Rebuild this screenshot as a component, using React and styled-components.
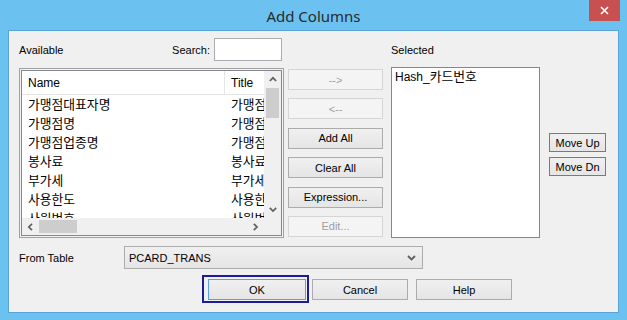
import React from 'react';
import styled, { createGlobalStyle } from 'styled-components';

const Global = createGlobalStyle`
  html, body { margin: 0; padding: 0; width: 627px; height: 320px; overflow: hidden; background: #6bc2f0; }
  #root { width: 627px; height: 320px; }
  * { box-sizing: border-box; }
`;

const Window = styled.div`
  width: 627px;
  height: 320px;
  background: #6bc2f0;
  display: flex;
  flex-direction: column;
  font-family: "Liberation Sans", "Noto Sans CJK KR", sans-serif;
  font-size: 11px;
  color: #000;
`;

const TitleBar = styled.div`
  height: 30px;
  flex: none;
  display: grid;
  grid-template-columns: 1fr auto 1fr;
  align-items: start;
`;

const Title = styled.div`
  grid-column: 2;
  font-family: "Noto Sans", "Open Sans", sans-serif;
  font-size: 15px;
  color: #2a2a2a;
  line-height: 30px;
  padding-top: 1px;
`;

const CloseBtn = styled.div`
  grid-column: 3;
  justify-self: end;
  margin-right: 7px;
  width: 31px;
  height: 21px;
  background: #c75050;
  display: flex;
  align-items: center;
  justify-content: center;
`;

const Client = styled.div`
  flex: 1;
  margin: 0 8px 7px;
  background: #f0f0f0;
  border: 1px solid #5aa3d4;
  padding: 7px 0 0 10px;
  display: flex;
  flex-direction: column;
`;

const Main = styled.div`
  display: flex;
  align-items: flex-start;
  height: 200px;
`;

const LeftCol = styled.div`
  width: 265px;
  display: flex;
  flex-direction: column;
`;

const HeaderRow = styled.div`
  height: 23px;
  display: flex;
  align-items: center;
  padding-right: 2px;
`;

const Label = styled.span`
  white-space: nowrap;
`;

const SearchGroup = styled.div`
  margin-left: auto;
  display: flex;
  align-items: center;
  gap: 4px;
`;

const TextInput = styled.div`
  width: 68px;
  height: 23px;
  background: #fff;
  border: 1px solid #abadb3;
`;

const ListView = styled.div`
  margin-top: 7px;
  height: 170px;
  border: 1px solid #a0a0a0;
  background: #f4f4f4;
  padding: 1px;
`;

const ListInner = styled.div`
  height: 100%;
  border: 1px solid #828790;
  background: #fff;
  display: grid;
  grid-template-columns: 1fr 17px;
  grid-template-rows: 1fr 17px;
  overflow: hidden;
`;

const ListBody = styled.div`
  overflow: hidden;
  font-size: 12px;
`;

const Ko = styled.span`
  font-size: 12.8px;
`;

const LvHeader = styled.div`
  height: 24px;
  display: flex;
  border-bottom: 1px solid #e5e5e5;
`;

const HeadCell = styled.div`
  flex: none;
  width: ${p => p.$w ? `${p.$w}px` : 'auto'};
  padding-left: 6px;
  display: flex;
  align-items: center;
  border-right: ${p => p.$divider ? '1px solid #e5e5e5' : 'none'};
  white-space: nowrap;
`;

const Row = styled.div`
  height: 19px;
  display: flex;
  align-items: center;
  white-space: nowrap;
`;

const Cell = styled.div`
  flex: none;
  width: ${p => p.$w ? `${p.$w}px` : 'auto'};
  padding-left: 6px;
  line-height: 19px;
  overflow: hidden;
`;

const VScroll = styled.div`
  grid-column: 2;
  grid-row: 1;
  background: #f0f0f0;
  display: flex;
  flex-direction: column;
`;

const HScroll = styled.div`
  grid-column: 1;
  grid-row: 2;
  background: #f0f0f0;
  display: flex;
  align-items: stretch;
`;

const Corner = styled.div`
  grid-column: 2;
  grid-row: 2;
  background: #f0f0f0;
`;

const ArrowBtn = styled.div`
  flex: none;
  width: 17px;
  height: 17px;
  display: flex;
  align-items: center;
  justify-content: center;
`;

const Track = styled.div`
  flex: 1;
  display: flex;
  flex-direction: ${p => p.$vertical ? 'column' : 'row'};
  padding: ${p => p.$vertical ? '0 2px' : '2px 0'};
`;

const Thumb = styled.div`
  background: #cdcdcd;
  ${p => p.$vertical ? `height: ${p.$size}px;` : `width: ${p.$size}px;`}
`;

const MidCol = styled.div`
  margin-left: 4px;
  width: 95px;
  padding-top: 31px;
  display: flex;
  flex-direction: column;
  gap: 8.4px;
`;

const Button = styled.button`
  font: inherit;
  font-size: 11px;
  margin: 0;
  padding: 0;
  width: ${p => p.$w ? `${p.$w}px` : '100%'};
  height: ${p => p.$h || 21}px;
  border: 1px solid ${p => p.disabled ? '#d5d5d5' : p.$default ? '#5aa0e6' : p.$dark ? '#7a7a7a' : '#acacac'};
  background: ${p => p.disabled ? '#f4f4f4' : 'linear-gradient(#f0f0f0, #e5e5e5)'};
  color: ${p => p.disabled ? '#a0a0a0' : '#000'};
  display: flex;
  align-items: center;
  justify-content: center;
  white-space: nowrap;
`;

const SelCol = styled.div`
  margin-left: 8px;
  width: 149px;
  display: flex;
  flex-direction: column;
`;

const SelLabelRow = styled.div`
  height: 23px;
  display: flex;
  align-items: center;
`;

const SelList = styled.div`
  margin-top: 6px;
  height: 171px;
  background: #fff;
  border: 1px solid #828790;
  padding: 1px 3px 0;
  font-size: 12px;
  line-height: 15px;
`;

const MoveCol = styled.div`
  margin-left: 9px;
  width: 57px;
  padding-top: 95px;
  display: flex;
  flex-direction: column;
  gap: 5px;
`;

const FromRow = styled.div`
  margin-top: 8px;
  height: 23px;
  display: flex;
  align-items: center;
`;

const FromLabel = styled.span`
  width: 105px;
  flex: none;
`;

const Combo = styled.div`
  width: 299px;
  height: 23px;
  border: 1px solid #acacac;
  background: linear-gradient(#f0f0f0, #e5e5e5);
  display: flex;
  align-items: center;
  padding: 0 6px 0 4px;
`;

const ComboText = styled.span`
  flex: 1;
`;

const BottomRow = styled.div`
  margin-top: 6px;
  display: flex;
  align-items: flex-start;
  padding-left: 183px;
`;

const FocusFrame = styled.div`
  border: 2px solid #1c1c9a;
  padding: 2px 1px 1px 4px;
`;

const Spaced = styled.div`
  margin-left: ${p => p.$ml}px;
  margin-top: 4px;
`;

const Chevron = ({ dir }) => {
  const pts = {
    up: '0.8,5 4,1.8 7.2,5',
    down: '0.8,1.8 4,5 7.2,1.8',
    left: '5,0.8 1.8,4 5,7.2',
    right: '1.8,0.8 5,4 1.8,7.2',
  }[dir];
  const vertical = dir === 'up' || dir === 'down';
  return (
    <svg width={vertical ? 8 : 7} height={vertical ? 7 : 8} viewBox={vertical ? '0 0 8 7' : '0 0 7 8'}>
      <polyline points={pts} fill="none" stroke="#606060" strokeWidth="1.7" />
    </svg>
  );
};

const rows = [
  ['가맹점대표자명', '가맹점대표자명'],
  ['가맹점명', '가맹점명'],
  ['가맹점업종명', '가맹점업종명'],
  ['봉사료', '봉사료'],
  ['부가세', '부가세'],
  ['사용한도', '사용한도'],
  ['사원번호', '사원번호'],
];

export default function App() {
  return (
    <>
      <Global />
      <Window>
        <TitleBar>
          <Title>Add Columns</Title>
          <CloseBtn>
            <svg width="9" height="9" viewBox="0 0 9 9">
              <path d="M1 1 L8 8 M8 1 L1 8" stroke="#fff" strokeWidth="1.6" />
            </svg>
          </CloseBtn>
        </TitleBar>
        <Client>
          <Main>
            <LeftCol>
              <HeaderRow>
                <Label>Available</Label>
                <SearchGroup>
                  <Label>Search:</Label>
                  <TextInput />
                </SearchGroup>
              </HeaderRow>
              <ListView>
                <ListInner>
                  <ListBody>
                    <LvHeader>
                      <HeadCell $w={203} $divider>Name</HeadCell>
                      <HeadCell>Title</HeadCell>
                    </LvHeader>
                    {rows.map(([n, t]) => (
                      <Row key={n}>
                        <Cell $w={203}><Ko>{n}</Ko></Cell>
                        <Cell><Ko>{t}</Ko></Cell>
                      </Row>
                    ))}
                  </ListBody>
                  <VScroll>
                    <ArrowBtn><Chevron dir="up" /></ArrowBtn>
                    <Track $vertical>
                      <Thumb $vertical $size={30} />
                    </Track>
                    <ArrowBtn><Chevron dir="down" /></ArrowBtn>
                  </VScroll>
                  <HScroll>
                    <ArrowBtn><Chevron dir="left" /></ArrowBtn>
                    <Track>
                      <Thumb $size={38} />
                    </Track>
                    <ArrowBtn><Chevron dir="right" /></ArrowBtn>
                  </HScroll>
                  <Corner />
                </ListInner>
              </ListView>
            </LeftCol>
            <MidCol>
              <Button disabled>--&gt;</Button>
              <Button disabled>&lt;--</Button>
              <Button>Add All</Button>
              <Button>Clear All</Button>
              <Button>Expression...</Button>
              <Button disabled>Edit...</Button>
            </MidCol>
            <SelCol>
              <SelLabelRow><Label>Selected</Label></SelLabelRow>
              <SelList>Hash_<Ko>카드번호</Ko></SelList>
            </SelCol>
            <MoveCol>
              <Button $dark $h={19}>Move Up</Button>
              <Button $dark $h={19}>Move Dn</Button>
            </MoveCol>
          </Main>
          <FromRow>
            <FromLabel>From Table</FromLabel>
            <Combo>
              <ComboText>PCARD_TRANS</ComboText>
              <svg width="9" height="6" viewBox="0 0 9 6">
                <polyline points="1,1 4.5,4.5 8,1" fill="none" stroke="#606060" strokeWidth="1.8" />
              </svg>
            </Combo>
          </FromRow>
          <BottomRow>
            <FocusFrame>
              <Button $default $w={98}>OK</Button>
            </FocusFrame>
            <Spaced $ml={3}>
              <Button $w={96}>Cancel</Button>
            </Spaced>
            <Spaced $ml={8}>
              <Button $w={96}>Help</Button>
            </Spaced>
          </BottomRow>
        </Client>
      </Window>
    </>
  );
}
